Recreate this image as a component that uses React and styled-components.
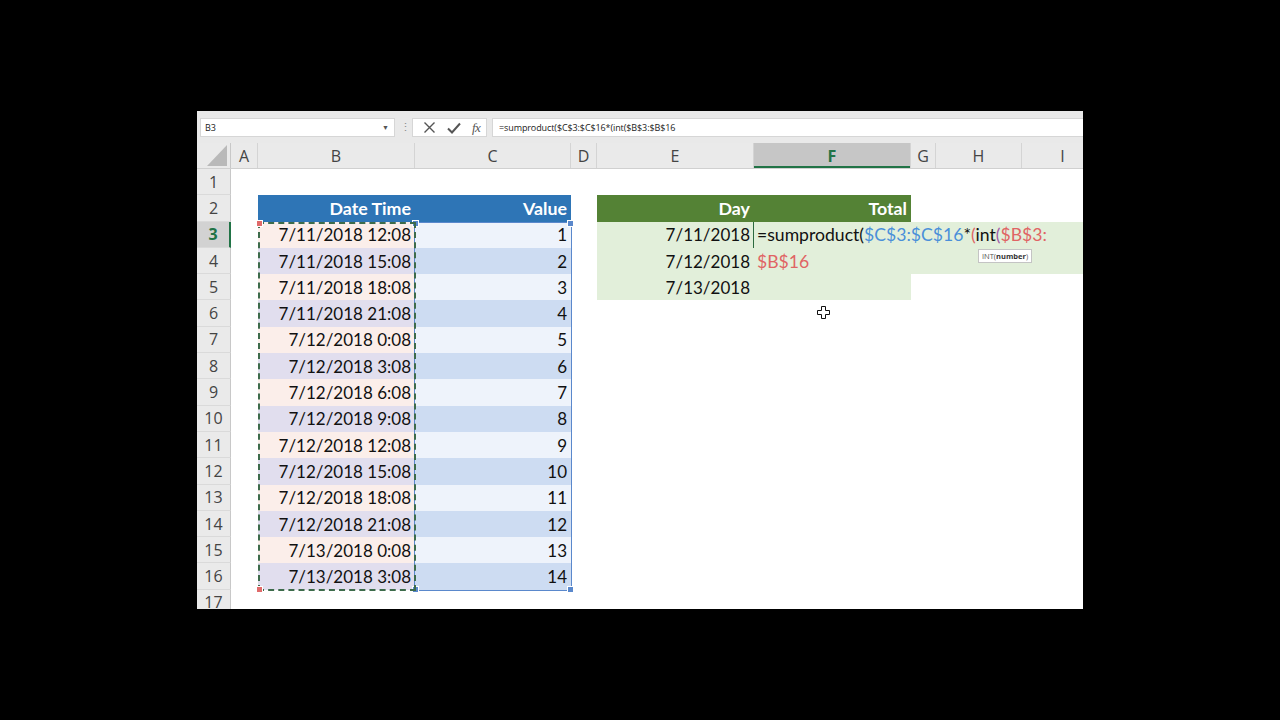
import React from "react";
import styled, { createGlobalStyle } from "styled-components";

const GlobalStyle = createGlobalStyle`
  html, body {
    margin: 0;
    padding: 0;
    background: #000;
  }
`;

const COLS = [34, 27, 157, 156, 26, 157, 157, 25, 86, 82];
const LETTERS = ["", "A", "B", "C", "D", "E", "F", "G", "H", "I"];
const ROW_H = 26.3;
const GRID = COLS.map((w) => w + "px").join(" ");

const Stage = styled.div`
  width: 1280px;
  height: 720px;
  background: #000;
  padding: 111px 0 0 197px;
  box-sizing: border-box;
`;

const Window = styled.div`
  width: 886px;
  height: 498px;
  background: #fff;
  overflow: hidden;
  display: flex;
  flex-direction: column;
  position: relative;
`;

const FormulaBar = styled.div`
  height: 32px;
  flex: none;
  background: #e9e9e9;
  display: flex;
  align-items: flex-start;
  padding-top: 7px;
  box-sizing: border-box;
`;

const NameBox = styled.div`
  width: 195px;
  height: 19px;
  margin-left: 3px;
  background: #fff;
  border: 1px solid #d6d6d6;
  box-sizing: border-box;
  display: flex;
  align-items: center;
  justify-content: space-between;
  padding: 0 5px 0 4px;
  font: 9px "Open Sans", "Liberation Sans", sans-serif;
  color: #222;
`;

const Caret = styled.span`
  font-size: 7px;
  color: #555;
`;

const Dots = styled.div`
  width: 20px;
  height: 19px;
  display: flex;
  align-items: center;
  justify-content: center;
  color: #8a8a8a;
  font: 11px "Liberation Sans", sans-serif;
`;

const FxBox = styled.div`
  width: 75px;
  height: 19px;
  margin-left: -3px;
  background: #fff;
  border: 1px solid #d6d6d6;
  box-sizing: border-box;
  display: flex;
  align-items: center;
  justify-content: space-around;
  padding: 0 0 0 4px;
`;

const Fx = styled.span`
  font: italic 13px "Liberation Serif", serif;
  color: #555;
  letter-spacing: -0.5px;
`;

const FormulaInput = styled.div`
  flex: 1;
  height: 19px;
  margin-left: 5px;
  background: #fff;
  border: 1px solid #d6d6d6;
  border-right: none;
  box-sizing: border-box;
  display: flex;
  align-items: center;
  padding-left: 6px;
  font: 9px "Open Sans", "Liberation Sans", sans-serif;
  letter-spacing: -0.1px;
  color: #222;
`;

const HeaderRow = styled.div`
  height: 26px;
  flex: none;
  display: grid;
  grid-template-columns: ${GRID};
  background: #eaeaea;
  border-bottom: 1px solid #d0d0d0;
  box-sizing: border-box;
`;

const ColHead = styled.div`
  display: flex;
  align-items: center;
  justify-content: center;
  border-right: 1px solid #d4d4d4;
  font: ${(p) => (p.$active ? "bold 16px" : "16px")} "Open Sans", "Liberation Sans", sans-serif;
  color: ${(p) => (p.$active ? "#217346" : "#444")};
  background: ${(p) => (p.$active ? "#c6c6c6" : "transparent")};
  box-shadow: ${(p) => (p.$active ? "inset 0 -2px 0 #217346" : "none")};
`;

const Corner = styled.div`
  position: relative;
  border-right: 1px solid #c8c8c8;
  &::after {
    content: "";
    position: absolute;
    right: 3px;
    bottom: 2px;
    border-style: solid;
    border-width: 0 0 21px 20px;
    border-color: transparent transparent #b9b9b9 transparent;
  }
`;

const Sheet = styled.div`
  position: relative;
  flex: 1;
`;

const Row = styled.div`
  height: ${ROW_H}px;
  display: grid;
  grid-template-columns: ${GRID};
`;

const RowHead = styled.div`
  display: flex;
  align-items: center;
  justify-content: center;
  background: ${(p) => (p.$active ? "#d2d2d2" : "#eaeaea")};
  border-right: ${(p) => (p.$active ? "2px solid #217346" : "1px solid #c8c8c8")};
  border-bottom: 1px solid #dadada;
  box-sizing: border-box;
  font: ${(p) => (p.$active ? "bold 16px" : "16px")} "Open Sans", "Liberation Sans", sans-serif;
  color: ${(p) => (p.$active ? "#217346" : "#444")};
`;

const Cell = styled.div`
  display: flex;
  align-items: center;
  justify-content: flex-end;
  padding-right: 4px;
  background: ${(p) => p.$bg || "transparent"};
  color: ${(p) => p.$color || "#111"};
  font: ${(p) => (p.$bold ? "bold 17.8px" : "normal 17px")} Lato, "Liberation Sans", sans-serif;
  white-space: nowrap;
  overflow: visible;
`;

const RangeBox = styled.div`
  position: absolute;
  box-sizing: border-box;
  pointer-events: none;
  border: ${(p) => p.$border};
`;

const Handle = styled.span`
  position: absolute;
  width: 5px;
  height: 5px;
  background: ${(p) => p.$c};
  border: 1px solid #fff;
  box-sizing: content-box;
`;

const EditBox = styled.div`
  position: absolute;
  background: #e2efda;
  box-sizing: border-box;
  font: 17.6px Lato, "Liberation Sans", sans-serif;
  color: #111;
`;

const EditLine = styled.div`
  height: ${ROW_H}px;
  display: flex;
  align-items: center;
  white-space: nowrap;
  padding-left: 3px;
  box-sizing: border-box;
  border-left: 1.5px solid ${(p) => (p.$caret ? "#2c6a3f" : "transparent")};
`;

const Ref = styled.span`
  color: ${(p) => p.$c};
`;

const Tip = styled.div`
  position: absolute;
  background: #fff;
  border: 1px solid #c4c4c4;
  padding: 0 3px;
  height: 12px;
  display: flex;
  align-items: center;
  font: 7.5px "Open Sans", "Liberation Sans", sans-serif;
  color: #555;
  b {
    color: #333;
  }
`;

const Pointer = styled.svg`
  position: absolute;
`;

const DATES = [
  "7/11/2018 12:08",
  "7/11/2018 15:08",
  "7/11/2018 18:08",
  "7/11/2018 21:08",
  "7/12/2018 0:08",
  "7/12/2018 3:08",
  "7/12/2018 6:08",
  "7/12/2018 9:08",
  "7/12/2018 12:08",
  "7/12/2018 15:08",
  "7/12/2018 18:08",
  "7/12/2018 21:08",
  "7/13/2018 0:08",
  "7/13/2018 3:08",
];

const BLUE = "#2e75b6";
const GREEN = "#548235";
const LIGHT_GREEN = "#e2efda";

function cellsFor(r) {
  // one entry per column, A..I
  const c = Array.from({ length: 9 }, () => ({}));
  if (r === 2) {
    c[1] = { text: "Date Time", bg: BLUE, color: "#fff", bold: true };
    c[2] = { text: "Value", bg: BLUE, color: "#fff", bold: true };
    c[4] = { text: "Day", bg: GREEN, color: "#fff", bold: true };
    c[5] = { text: "Total", bg: GREEN, color: "#fff", bold: true };
  }
  if (r >= 3 && r <= 16) {
    const light = r % 2 === 1;
    c[1] = { text: DATES[r - 3], bg: light ? "#fbeeea" : "#e1deee" };
    c[2] = { text: String(r - 2), bg: light ? "#eef3fb" : "#cddcf2" };
  }
  if (r >= 3 && r <= 5) {
    c[4] = { text: `7/${8 + r}/2018`, bg: LIGHT_GREEN };
    c[5] = { bg: LIGHT_GREEN };
  }
  return c;
}

const colX = (i) => COLS.slice(0, i).reduce((a, b) => a + b, 0);

export default function App() {
  const rows = Array.from({ length: 17 }, (_, i) => i + 1);
  return (
    <>
      <GlobalStyle />
      <Stage>
        <Window>
          <FormulaBar>
            <NameBox>
              B3
              <Caret>▼</Caret>
            </NameBox>
            <Dots>⋮</Dots>
            <FxBox>
              <svg width="13" height="13" viewBox="0 0 13 13">
                <path d="M1.5 1.5 L11.5 11.5 M11.5 1.5 L1.5 11.5" stroke="#555" strokeWidth="1.4" />
              </svg>
              <svg width="14" height="12" viewBox="0 0 14 12">
                <path d="M1 6.5 L5 10.5 L13 1.5" stroke="#555" strokeWidth="2" fill="none" />
              </svg>
              <Fx>fx</Fx>
            </FxBox>
            <FormulaInput>=sumproduct($C$3:$C$16*(int($B$3:$B$16</FormulaInput>
          </FormulaBar>
          <HeaderRow>
            <Corner />
            {LETTERS.slice(1).map((l) => (
              <ColHead key={l} $active={l === "F"}>
                {l}
              </ColHead>
            ))}
          </HeaderRow>
          <Sheet>
            {rows.map((r) => (
              <Row key={r}>
                <RowHead $active={r === 3}>{r}</RowHead>
                {cellsFor(r).map((c, i) => (
                  <Cell key={i} $bg={c.bg} $color={c.color} $bold={c.bold}>
                    {c.text}
                  </Cell>
                ))}
              </Row>
            ))}

            <RangeBox
              $border="1px solid #5a88cc"
              style={{ left: colX(3) - 1, top: ROW_H * 2, width: COLS[3] + 2, height: ROW_H * 14 + 1 }}
            >
              <Handle $c="#5a88cc" style={{ left: -3, top: -3 }} />
              <Handle $c="#5a88cc" style={{ right: -3, top: -3 }} />
              <Handle $c="#5a88cc" style={{ left: -3, bottom: -3 }} />
              <Handle $c="#5a88cc" style={{ right: -3, bottom: -3 }} />
            </RangeBox>
            <RangeBox
              $border="2px dashed #3d6b4b"
              style={{ left: colX(2), top: ROW_H * 2, width: COLS[2] + 1, height: ROW_H * 14 + 1 }}
            >
              <Handle $c="#e06a6a" style={{ left: -4, top: -4 }} />
              <Handle $c="#e06a6a" style={{ left: -4, bottom: -4 }} />
            </RangeBox>

            <EditBox
              style={{ left: colX(6) - 1, top: ROW_H * 2, width: 887 - colX(6), height: ROW_H * 2 }}
            >
              <EditLine $caret>
                =sumproduct(<Ref $c="#4a8fd9">$C$3:$C$16</Ref>*<Ref $c="#e06464">(</Ref>int
                <Ref $c="#a05aa8">(</Ref>
                <Ref $c="#e06464">$B$3:</Ref>
              </EditLine>
              <EditLine>
                <Ref $c="#e06464">$B$16</Ref>
              </EditLine>
            </EditBox>
            <Tip style={{ left: 781, top: 80 }}>
              INT(<b>number</b>)
            </Tip>
            <Pointer width="13" height="13" viewBox="0 0 13 13" style={{ left: 620, top: 137 }}>
              <path
                d="M4.5 0.5 H8.5 V4.5 H12.5 V8.5 H8.5 V12.5 H4.5 V8.5 H0.5 V4.5 H4.5 Z"
                fill="#fff"
                stroke="#111"
                strokeWidth="1"
              />
            </Pointer>
          </Sheet>
        </Window>
      </Stage>
    </>
  );
}
